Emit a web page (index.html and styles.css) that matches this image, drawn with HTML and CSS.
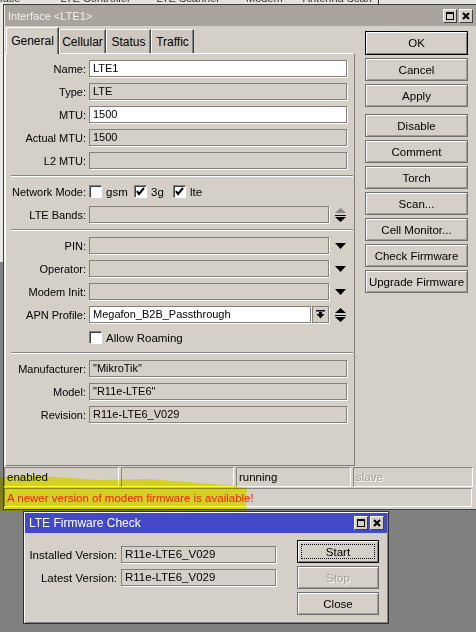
FILE: index.html
```html
<!DOCTYPE html>
<html>
<head>
<meta charset="utf-8">
<title>Interface LTE1</title>
<link rel="stylesheet" href="styles.css">
</head>
<body>
<div class="screen">
  <div class="bgstrip">
    <span class="frag f1">rface</span><span class="frag f2">LTE Controller</span><span class="frag f3">LTE Scanner</span><span class="frag f4">Modem</span><span class="frag f5">Antenna Scan</span>
  </div>
  <div class="mainrow">
    <div class="leftedge"></div>
    <div class="win">
      <div class="titlebar">
        <span class="ttl">Interface &lt;LTE1&gt;</span>
        <div class="tbtns">
          <span class="tbtn"><svg width="12" height="12" viewBox="0 0 12 12"><rect x="2.5" y="2.5" width="7" height="7" fill="none" stroke="#000" stroke-width="1"/><line x1="2" y1="3" x2="10" y2="3" stroke="#000" stroke-width="2"/></svg></span>
          <span class="tbtn"><svg width="12" height="12" viewBox="0 0 12 12"><path d="M3 3 L9 9 M9 3 L3 9" stroke="#000" stroke-width="2"/></svg></span>
        </div>
      </div>
      <div class="winbody">
        <div class="leftcol">
          <div class="tabs">
            <div class="tab active">General</div>
            <div class="tab t2">Cellular</div>
            <div class="tab t3">Status</div>
            <div class="tab t4">Traffic</div>
          </div>
          <div class="panel">
            <div class="row"><span class="lbl">Name:</span><span class="fld full white">LTE1</span></div>
            <div class="row"><span class="lbl">Type:</span><span class="fld full">LTE</span></div>
            <div class="row"><span class="lbl">MTU:</span><span class="fld full white">1500</span></div>
            <div class="row"><span class="lbl">Actual MTU:</span><span class="fld full">1500</span></div>
            <div class="row"><span class="lbl">L2 MTU:</span><span class="fld full"></span></div>
            <div class="sep"></div>
            <div class="row">
              <span class="lbl">Network Mode:</span>
              <span class="opt o1"><span class="cb"></span><span class="otxt">gsm</span></span>
              <span class="opt o2"><span class="cb"><svg width="11" height="11" viewBox="0 0 11 11"><path d="M2 5 L4 8 L9 2" fill="none" stroke="#000" stroke-width="2"/></svg></span><span class="otxt">3g</span></span>
              <span class="opt o3"><span class="cb"><svg width="11" height="11" viewBox="0 0 11 11"><path d="M2 5 L4 8 L9 2" fill="none" stroke="#000" stroke-width="2"/></svg></span><span class="otxt">lte</span></span>
            </div>
            <div class="row"><span class="lbl">LTE Bands:</span><span class="fld short"></span>
              <span class="arr"><svg width="11" height="14" viewBox="0 0 11 14"><path d="M5.5 0 L11 5 L0 5 Z" fill="#8a8884"/><rect x="0" y="7" width="11" height="1" fill="#000"/><path d="M0 9 L11 9 L5.5 14 Z" fill="#000"/></svg></span>
            </div>
            <div class="sep"></div>
            <div class="row"><span class="lbl">PIN:</span><span class="fld short"></span>
              <span class="arr"><svg width="11" height="6" viewBox="0 0 11 6"><path d="M0 0 L11 0 L5.5 6 Z" fill="#000"/></svg></span>
            </div>
            <div class="row"><span class="lbl">Operator:</span><span class="fld short"></span>
              <span class="arr"><svg width="11" height="6" viewBox="0 0 11 6"><path d="M0 0 L11 0 L5.5 6 Z" fill="#000"/></svg></span>
            </div>
            <div class="row"><span class="lbl">Modem Init:</span><span class="fld short"></span>
              <span class="arr"><svg width="11" height="6" viewBox="0 0 11 6"><path d="M0 0 L11 0 L5.5 6 Z" fill="#000"/></svg></span>
            </div>
            <div class="row"><span class="lbl">APN Profile:</span><span class="fld apn white">Megafon_B2B_Passthrough</span>
              <span class="ddbtn"><svg width="9" height="9" viewBox="0 0 9 9"><rect x="0" y="0" width="9" height="1.5" fill="#000"/><path d="M3 2 L6 2 L6 4 L8.5 4 L4.5 8.5 L0.5 4 L3 4 Z" fill="#000"/></svg></span>
              <span class="arr"><svg width="11" height="14" viewBox="0 0 11 14"><path d="M5.5 0 L11 5 L0 5 Z" fill="#000"/><rect x="0" y="7" width="11" height="1" fill="#000"/><path d="M0 9 L11 9 L5.5 14 Z" fill="#000"/></svg></span>
            </div>
            <div class="row">
              <span class="lblsp"></span>
              <span class="cb"></span><span class="otxt">Allow Roaming</span>
            </div>
            <div class="sep"></div>
            <div class="row"><span class="lbl">Manufacturer:</span><span class="fld full">"MikroTik"</span></div>
            <div class="row"><span class="lbl">Model:</span><span class="fld full">"R11e-LTE6"</span></div>
            <div class="row"><span class="lbl">Revision:</span><span class="fld full">R11e-LTE6_V029</span></div>
          </div>
        </div>
        <div class="btncol">
          <div class="btn def">OK</div>
          <div class="btn">Cancel</div>
          <div class="btn gapafter">Apply</div>
          <div class="btn">Disable</div>
          <div class="btn">Comment</div>
          <div class="btn">Torch</div>
          <div class="btn">Scan...</div>
          <div class="btn">Cell Monitor...</div>
          <div class="btn">Check Firmware</div>
          <div class="btn">Upgrade Firmware</div>
        </div>
      </div>
      <div class="status">
        <div class="srow">
          <div class="seg s1">enabled</div>
          <div class="seg s2"></div>
          <div class="seg s3">running</div>
          <div class="seg s4 dim">slave</div>
        </div>
        <div class="seg msg">A newer version of modem firmware is available!</div>
      </div>
    </div>
  </div>
  <div class="dlgarea">
    <div class="dlg">
      <div class="dtitle">
        <span class="dttl">LTE Firmware Check</span>
        <div class="tbtns">
          <span class="tbtn"><svg width="12" height="12" viewBox="0 0 12 12"><rect x="2.5" y="2.5" width="7" height="7" fill="none" stroke="#000" stroke-width="1"/><line x1="2" y1="3" x2="10" y2="3" stroke="#000" stroke-width="2"/></svg></span>
          <span class="tbtn"><svg width="12" height="12" viewBox="0 0 12 12"><path d="M3 3 L9 9 M9 3 L3 9" stroke="#000" stroke-width="2"/></svg></span>
        </div>
      </div>
      <div class="dbody">
        <div class="dfields">
          <div class="drow"><span class="dlbl">Installed Version:</span><span class="fld dfld">R11e-LTE6_V029</span></div>
          <div class="drow"><span class="dlbl">Latest Version:</span><span class="fld dfld">R11e-LTE6_V029</span></div>
        </div>
        <div class="dbtns">
          <div class="btn dbtn focus"><span class="focusring">Start</span></div>
          <div class="btn dbtn dim">Stop</div>
          <div class="btn dbtn">Close</div>
        </div>
      </div>
    </div>
  </div>
  <div class="highlight"></div>
</div>
</body>
</html>
```

FILE: styles.css
```css
* { box-sizing: border-box; }
html, body { margin: 0; padding: 0; }
body {
  width: 476px;
  height: 632px;
  overflow: hidden;
  background: #808080;
  font-family: "Liberation Sans", Arial, sans-serif;
  font-size: 11px;
  color: #000;
}
.screen { position: relative; width: 476px; height: 632px; }

/* background window hint */
.bgstrip {
  height: 4px;
  overflow: hidden;
  background: #e6e3de;
  display: flex;
  white-space: nowrap;
}
.frag { display: block; line-height: 12px; margin-top: -8px; color: #333; font-size: 11px; }
.f1 { margin-left: -4px; }
.f2 { margin-left: 40px; }
.f3 { margin-left: 26px; }
.f4 { margin-left: 26px; }
.f5 { margin-left: 20px; padding-right: 6px; border-right: 1px solid #333; }

.mainrow { display: flex; height: 506px; }
.leftedge {
  width: 3px;
  background: linear-gradient(#ebe8e4 0, #ebe8e4 258px, #808080 258px);
}

/* main window */
.win {
  width: 473px;
  background: #d4d0c8;
  border-left: 1px solid #404040;
  border-top: 1px solid #404040;
  border-bottom: 1px solid #404040;
  padding-bottom: 2px;
  box-shadow: inset 1px 0 #f4f2ee;
}
.titlebar {
  height: 21px;
  margin-left: 1px;
  background: #a9a59e;
  display: flex;
  align-items: center;
  justify-content: space-between;
  padding-left: 3px;
  padding-right: 3px;
}
.ttl { color: #f2f1ee; font-size: 11px; }
.tbtns { display: flex; gap: 2px; }
.tbtn {
  width: 14px;
  height: 14px;
  background: #d4d0c8;
  border: 1px solid;
  border-color: #fff #404040 #404040 #fff;
  display: flex;
  align-items: center;
  justify-content: center;
}
.tbtn svg { display: block; }

.winbody { display: flex; height: 440px; }
.leftcol { margin-left: 1px; width: 350px; }

.tabs {
  height: 28px;
  margin-bottom: -1px;
  padding-left: 1px;
  display: flex;
  align-items: flex-end;
  position: relative;
  z-index: 1;
}
.tab {
  height: 24px;
  margin-bottom: 1px;
  display: flex;
  align-items: center;
  justify-content: center;
  background: #cdc9c1;
  border-top: 1px solid #fff;
  border-left: 1px solid #fff;
  border-right: 1px solid #404040;
  box-shadow: inset -1px 0 #808080;
  font-size: 12px;
}
.tab.active {
  height: 27px;
  margin-bottom: 0;
  width: 53px;
  background: #d4d0c8;
  font-size: 12px;
}
.t2 { width: 47px; }
.t3 { width: 45px; }
.t4 { width: 43px; }

.panel {
  height: 413px;
  border: 1px solid;
  border-color: #fff #808080 #808080 #fff;
  padding-top: 6px;
}
.row {
  display: flex;
  align-items: center;
  height: 17px;
  margin-bottom: 6px;
  white-space: nowrap;
}
.lbl { width: 80px; text-align: right; margin-right: 3px; }
.lblsp { width: 83px; }
.fld {
  height: 17px;
  border: 1px solid #858179;
  box-shadow: 1px 1px 0 #fff;
  padding-left: 3px;
  line-height: 15px;
  background: #d4d0c8;
  white-space: nowrap;
  overflow: hidden;
}
.fld.white { background: #fff; }
.fld.full { width: 258px; }
.fld.short { width: 240px; }
.fld.apn { width: 222px; }
.arr {
  margin-left: 6px;
  width: 11px;
  display: flex;
  align-items: center;
  justify-content: center;
}
.arr svg { display: block; }
.ddbtn {
  width: 17px;
  height: 17px;
  margin-left: 1px;
  border: 1px solid #858179;
  box-shadow: 1px 1px 0 #fff;
  display: flex;
  align-items: center;
  justify-content: center;
}
.ddbtn svg { display: block; }
.sep {
  margin-left: 5px;
  width: 342px;
  height: 2px;
  border-top: 1px solid #8a8680;
  border-bottom: 1px solid #fff;
  margin-bottom: 6px;
}
.opt { display: flex; align-items: center; }
.o1 { width: 45px; }
.o2 { width: 39px; }
.cb {
  width: 13px;
  height: 13px;
  background: #fff;
  border: 1px solid;
  border-color: #808080 #fff #fff #808080;
  box-shadow: inset 1px 1px #404040;
  display: flex;
  align-items: center;
  justify-content: center;
  flex: none;
}
.cb svg { display: block; }
.otxt { margin-left: 4px; font-size: 11.5px; }

/* buttons */
.btncol { margin-left: 10px; padding-top: 5px; width: 103px; }
.btn {
  height: 23px;
  width: 103px;
  margin-bottom: 3px;
  display: flex;
  align-items: center;
  justify-content: center;
  background: #d4d0c8;
  border: 1px solid #707070;
  box-shadow: inset 1px 1px #fff, inset -1px -1px #a09c94;
  font-size: 11.5px;
  white-space: nowrap;
}
.btn.def {
  height: 24px;
  border: 1px solid #000;
  box-shadow: inset 1px 1px #fff, inset -1px -1px #808080;
}
.btn.gapafter { margin-bottom: 7px; }

/* status bar */
.status { margin-top: 1px; }
.srow { display: flex; gap: 2px; height: 20px; }
.seg {
  border: 1px solid;
  border-color: #8a8680 #fff #fff #8a8680;
  display: flex;
  align-items: center;
  padding-left: 2px;
  white-space: nowrap;
  font-size: 11.5px;
}
.s1 { width: 115px; }
.s2 { width: 113px; }
.s3 { width: 115px; }
.s4 { width: 120px; }
.dim { color: #a09c94; text-shadow: 1px 1px 0 #fff; }
.msg {
  margin-top: 1px;
  height: 19px;
  width: 468px;
  color: #ff1a00;
}

/* firmware check dialog */
.dlgarea { padding-left: 23px; padding-top: 1px; }
.dlg {
  width: 366px;
  height: 113px;
  background: #d4d0c8;
  border: 1px solid #303030;
  padding: 1px;
  box-shadow: inset 1px 1px #fff, inset -1px -1px #808080;
}
.dtitle {
  height: 20px;
  background: #4248c8;
  display: flex;
  align-items: center;
  justify-content: space-between;
  padding-left: 4px;
  padding-right: 3px;
}
.dttl { color: #fff; font-size: 12px; }
.dbody { display: flex; padding-top: 7px; }
.dfields { padding-left: 2px; padding-top: 6px; }
.drow { display: flex; align-items: center; height: 17px; margin-bottom: 6px; white-space: nowrap; }
.dlbl { width: 90px; text-align: right; margin-right: 4px; font-size: 11.5px; }
.dfld { width: 155px; font-size: 11.5px; }
.dbtns { margin-left: 21px; }
.btn.dbtn { width: 82px; }
.btn.focus {
  border: 1px solid #000;
  box-shadow: inset 1px 1px #fff, inset -1px -1px #808080;
  padding: 3px;
}
.focusring {
  flex: 1;
  align-self: stretch;
  display: flex;
  align-items: center;
  justify-content: center;
  border: 1px dotted #000;
}

/* yellow marker overlay */
.highlight {
  position: absolute;
  left: 0;
  top: 476px;
  width: 247px;
  height: 36px;
  background: #ffff30;
  mix-blend-mode: multiply;
  clip-path: polygon(0 1px, 40px 0, 100px 4px, 150px 3px, 200px 7px, 236px 10px, 247px 12px, 246px 35px, 120px 36px, 0 35px);
}
```
